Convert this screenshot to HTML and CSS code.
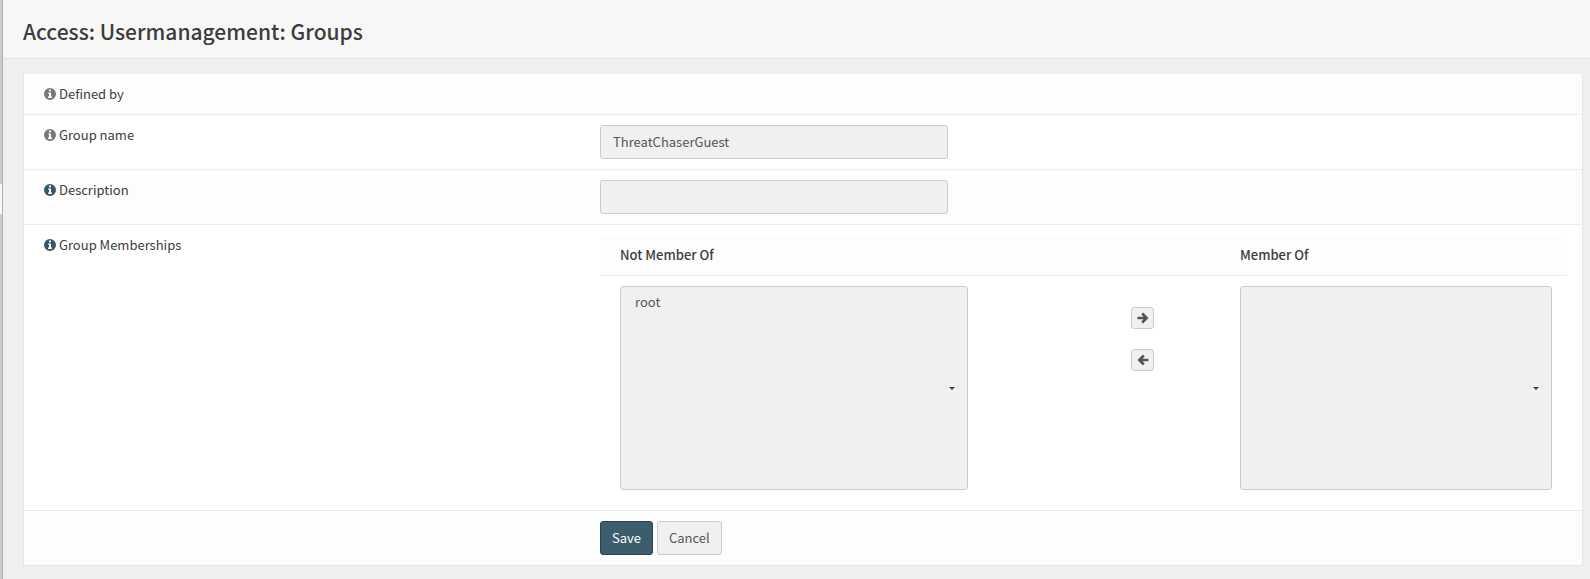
FILE: index.html
```html
<!DOCTYPE html>
<html lang="en">

<head>
  <meta charset="UTF-8">
  <meta name="viewport" content="width=device-width, initial-scale=1.0">
  <title>Access: Usermanagement: Groups</title>
  <link rel="stylesheet" href="styles.css">
</head>

<body>
  <svg class="sprite" aria-hidden="true">
    <symbol id="icon-info" viewBox="0 0 12 12">
      <path fill-rule="evenodd" d="M6 0a6 6 0 1 1 0 12a6 6 0 0 1 0-12zM5 1.500v1.800h2V1.500zM4 4.500v1h1v3H4v1.500h4V8.500H7v-4z"/>
    </symbol>
    <symbol id="icon-arrow" viewBox="0 0 12 12">
      <path d="M.5 6h9M5.200 1.500L9.700 6L5.200 10.500" fill="none" stroke="currentColor" stroke-width="2.600"/>
    </symbol>
  </svg>

  <aside class="sidebar">
    <div class="sidebar-active"></div>
  </aside>

  <div class="page">
    <header class="page-head">
      <h1>Access: Usermanagement: Groups</h1>
    </header>

    <main class="content">
      <form class="panel">
        <div class="row">
          <div class="row-label"><svg class="info muted"><use href="#icon-info"/></svg>Defined by</div>
          <div class="row-field"></div>
        </div>
        <div class="row">
          <label class="row-label" for="groupname"><svg class="info muted"><use href="#icon-info"/></svg>Group name</label>
          <div class="row-field">
            <input type="text" class="control" id="groupname" value="ThreatChaserGuest">
          </div>
        </div>
        <div class="row">
          <label class="row-label" for="description"><svg class="info"><use href="#icon-info"/></svg>Description</label>
          <div class="row-field">
            <input type="text" class="control" id="description">
          </div>
        </div>
        <div class="row">
          <div class="row-label"><svg class="info"><use href="#icon-info"/></svg>Group Memberships</div>
          <div class="row-field">
            <table class="members">
              <thead>
                <tr>
                  <th class="col-not"><label for="notgroups">Not Member Of</label></th>
                  <th class="col-move"></th>
                  <th class="col-in"><label for="groups">Member Of</label></th>
                </tr>
              </thead>
              <tbody>
                <tr>
                  <td>
                    <div class="list">
                      <select class="control" id="notgroups" multiple>
                        <option>root</option>
                      </select>
                    </div>
                  </td>
                  <td>
                    <div class="move">
                      <button type="button" class="btn btn-xs" id="add_groups" aria-label="Add Groups"><svg><use href="#icon-arrow"/></svg></button>
                      <button type="button" class="btn btn-xs back" id="remove_groups" aria-label="Remove Groups"><svg><use href="#icon-arrow"/></svg></button>
                    </div>
                  </td>
                  <td>
                    <div class="list">
                      <select class="control" id="groups" multiple></select>
                    </div>
                  </td>
                </tr>
              </tbody>
            </table>
          </div>
        </div>
        <div class="row">
          <div class="row-label"></div>
          <div class="row-field actions">
            <button type="submit" class="btn btn-primary">Save</button>
            <button type="button" class="btn">Cancel</button>
          </div>
        </div>
      </form>
    </main>
  </div>
</body>

</html>
```
FILE: styles.css
```css
* {
  box-sizing: border-box;
}

body {
  margin: 0;
  min-height: 100vh;
  display: flex;
  background: #f0f0f0;
  color: #3c3c3b;
  font-family: "Noto Sans CJK SC", "Open Sans", sans-serif;
  font-size: 13px;
  line-height: 20px;
}

.sprite {
  position: absolute;
  width: 0;
  height: 0;
}

/* edge of the collapsed menu */
.sidebar {
  width: 3px;
  flex-shrink: 0;
  padding-top: 184px;
  background: #cbcbcb;
  border-right: 1px solid #b0b0b0;
}

.sidebar-active {
  height: 30px;
  background: #f7f7f7;
}

.page {
  flex: 1;
  min-width: 0;
}

.page-head {
  padding: 19px 20px 15px;
  background: #f7f7f7;
  border-bottom: 1px solid #e5e5e5;
}

h1 {
  margin: 0;
  font-size: 21px;
  line-height: 24px;
  font-weight: 500;
}

.content {
  padding: 15px 7px 13px 20px;
}

.panel {
  background: #fff;
  border: 1px solid #e5e5e5;
  border-top: 0;
}

.row {
  display: flex;
  border-top: 1px solid #ebebeb;
}

.row:first-child {
  border-top: 0;
}

.row:nth-child(odd) {
  background: #fdfdfd;
}

.row-label {
  width: 556px;
  flex-shrink: 0;
  padding: 10px 20px;
}

.row-field {
  flex: 1;
  min-width: 0;
  padding: 10px 15px 10px 20px;
}

.info {
  width: 12px;
  height: 12px;
  margin-right: 3px;
  vertical-align: -1px;
  fill: #35566a;
}

.info.muted {
  fill: #777;
}

.control {
  display: block;
  width: 100%;
  max-width: 348px;
  height: 34px;
  padding: 5px 12px 7px;
  background: #f0f0f0;
  border: 1px solid #ccc;
  border-radius: 3px;
  color: #555;
  font: inherit;
  outline: none;
}

.members {
  width: 100%;
  table-layout: fixed;
  border-collapse: separate;
  border-spacing: 0;
}

.members th {
  height: 41px;
  padding: 10px 15px 10px 20px;
  background: #fdfdfd;
  border-bottom: 1px solid #ebebeb;
  font-weight: 500;
  text-align: left;
}

.members td {
  padding: 10px 15px 10px 20px;
  vertical-align: top;
}

.col-not {
  width: 460px;
}

.col-move {
  width: 160px;
}

.list {
  position: relative;
  max-width: 348px;
}

.list .control {
  height: 204px;
  appearance: none;
}

.list option {
  padding: 0 2px;
}

.list::after {
  content: "";
  position: absolute;
  top: 101px;
  right: 13px;
  border: 3px solid transparent;
  border-top-color: #3c3c3b;
  border-bottom: 0;
}

.move {
  display: flex;
  flex-direction: column;
  align-items: center;
  gap: 20px;
  padding-top: 21px;
}

.btn {
  height: 34px;
  padding: 6px 11px;
  background: #f0f0f0;
  border: 1px solid #ccc;
  border-radius: 3px;
  color: #555;
  font: inherit;
  cursor: pointer;
}

.btn-primary {
  background: #3b5d6d;
  border-color: #2c4550;
  color: #fff;
}

.btn-xs {
  display: flex;
  align-items: center;
  justify-content: center;
  width: 23px;
  height: 22px;
  padding: 0;
}

.btn-xs svg {
  width: 12px;
  height: 12px;
}

.back svg {
  transform: rotate(180deg);
}

.actions {
  display: flex;
  gap: 4px;
}
```
